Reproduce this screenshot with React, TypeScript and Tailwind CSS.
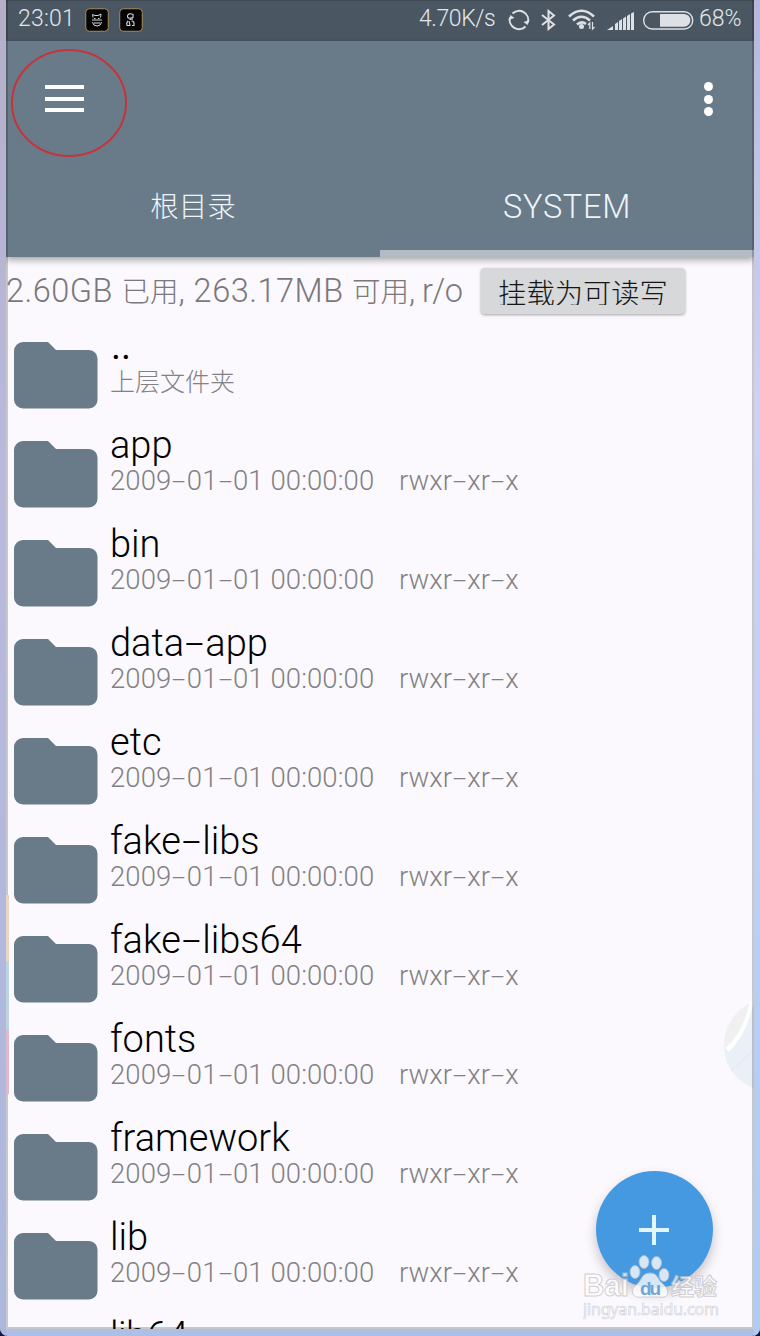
import React from 'react';

const folders = ['app', 'bin', 'data-app', 'etc', 'fake-libs', 'fake-libs64', 'fonts', 'framework', 'lib'];

function FolderIcon() {
    return (
        <svg className="w-[84px] h-[67px] shrink-0" viewBox="0 0 84 67" fill="#697b89">
            <path d="M9 0H34L42 8H75A8.500 8.500 0 0 1 83.500 17V58A8.500 8.500 0 0 1 75 66.500H9A9 9 0 0 1 0 58V9A9 9 0 0 1 9 0Z" />
        </svg>
    );
}

// hyphens are set wide, about as broad as a digit
function Dashed({ text }: { text: string }) {
    return (
        <>
            {text.split('-').map((part, i) => (
                <React.Fragment key={i}>
                    {i > 0 && <span className="inline-block w-[0.56em] text-center tracking-normal leading-[0.7] scale-x-180">-</span>}
                    {part}
                </React.Fragment>
            ))}
        </>
    );
}

function StatusBar() {
    return (
        <div className="h-[41px] shrink-0 bg-[#4a5762] border-t border-[#3f4a54] flex items-start pl-3 pr-px text-[#e3e7ea] text-[23px] leading-[36px] font-light">
            <span className="w-[60px] tracking-[0.2px]">23:01</span>
            <svg className="w-6 h-6 mt-[7px] ml-[7px]" viewBox="0 0 24 24" fill="none">
                <rect x="0.750" y="0.750" width="22.500" height="22.500" rx="3.500" fill="#050505" stroke="#a98d61" />
                <path d="M8 9.500L7.500 6.500L10 7.500H13L16 6L15.500 9.500M7 12H17M7.500 14Q8 18 12 18T16.500 14M9 10.500H10.500M13 10.500H14.500M9 15H15" stroke="#d8d8d8" strokeWidth="1" />
            </svg>
            <svg className="w-6 h-6 mt-[7px] ml-[10px]" viewBox="0 0 24 24" fill="none">
                <rect x="0.750" y="0.750" width="22.500" height="22.500" rx="3.500" fill="#050505" stroke="#a98d61" />
                <path d="M14.500 6.500Q9 4.500 8.500 8T14 9.500V6.500M10.500 11.500L14 11M9 13Q7 15 8 17.500H11L10 13M12.500 13Q15.500 13 15 17.500H13" stroke="#d8d8d8" strokeWidth="1.100" />
            </svg>
            <span className="ml-auto w-[78px] tracking-[-0.4px] whitespace-nowrap">4.70K/s</span>
            <svg className="w-[22px] h-[22px] mt-2 ml-[11px]" viewBox="0 0 22 22" fill="none" stroke="#dde0e4" strokeWidth="2">
                <path d="M4.500 4.500A9.300 9.300 0 0 1 20 13.500M17.500 17.500A9.300 9.300 0 0 1 2 8.500" />
                <path d="M21.500 11L19.500 16L15.500 13ZM0.500 11L2.500 6L6.500 9Z" fill="#dde0e4" stroke="none" />
            </svg>
            <svg className="w-[15px] h-[22px] mt-2 ml-[11px]" viewBox="0 0 15 22" fill="none" stroke="#dde0e4" strokeWidth="2">
                <path d="M1 6L13 15.500L7.500 20V2L13 6.500L1 16" />
            </svg>
            <svg className="w-7 h-[22px] mt-2 ml-3" viewBox="0 0 28 22" fill="none" stroke="#dde0e4" strokeWidth="2.600">
                <path d="M1 7.500Q13.500 -4 26 7.500M5 11.500Q13.500 4 22 11.500M9 15.500Q13.500 11.500 18 15" />
                <circle cx="13.500" cy="17.500" r="2.500" fill="#dde0e4" stroke="none" />
                <path d="M20 16L21.800 14V20M24.500 13V20L26.500 18" strokeWidth="1.200" />
            </svg>
            <svg className="w-[27px] h-[18px] mt-[11px] ml-[11px]" viewBox="0 0 27 18" fill="#dde0e4">
                <path d="M0 18L6 14V18ZM8 12L11 10V18H8ZM12 9L15 7V18H12ZM16 6.500L19 4.500V18H16ZM20 4L23 2V18H20ZM24 1.500L27 0V18H24Z" />
            </svg>
            <svg className="w-[51px] h-[19px] mt-[10px] ml-[9px]" viewBox="0 0 51 19" fill="none">
                <rect x="0.700" y="0.700" width="49" height="17.300" rx="8.600" stroke="#dde0e4" strokeWidth="1.400" />
                <path d="M17 3H41A6.300 6.300 0 0 1 41 15.700H17Z" fill="#dde0e4" />
            </svg>
            <span className="ml-[5px] w-[54px]">68%</span>
        </div>
    );
}

function Header() {
    return (
        <div className="relative z-10 h-[216px] shrink-0 bg-[#697b89] shadow-[0_3px_7px_rgba(0,0,0,0.35)] flex flex-col text-[#eef4f8]">
            <div className="relative h-[116px] flex justify-between">
                <div className="ml-[39px] mt-11 w-[39px] h-[27px] flex flex-col justify-between">
                    <div className="h-1 bg-white"></div>
                    <div className="h-1 bg-white"></div>
                    <div className="h-1 bg-white"></div>
                </div>
                <svg className="absolute left-[5px] top-[7px] w-[117px] h-[110px]" viewBox="0 0 117 110" fill="none">
                    <ellipse cx="58" cy="55" rx="57" ry="53" stroke="#c5333c" strokeWidth="2" />
                </svg>
                <div className="mr-[41px] mt-[41px] h-[34px] flex flex-col justify-between">
                    <div className="size-[9px] rounded-full bg-white"></div>
                    <div className="size-[9px] rounded-full bg-white"></div>
                    <div className="size-[9px] rounded-full bg-white"></div>
                </div>
            </div>
            <div className="flex flex-1 text-center font-light">
                <div className="w-[374px] pt-[33px] text-[28.500px] leading-[36px]">根目录</div>
                <div className="w-[374px] pt-[32px] border-b-[7px] border-[#b3bcc5] text-[32.500px] leading-[36px] tracking-[0.7px]">SYSTEM</div>
            </div>
        </div>
    );
}

function StorageInfo() {
    return (
        <div className="h-[73px] shrink-0 flex items-start pt-[11px] font-light text-[#79787b]">
            <span className="w-[475px] text-[32.500px] leading-[46px] whitespace-nowrap tracking-[0.5px]">
                2.60GB <span className="text-[28.500px] tracking-normal">已用</span>, 263.17MB <span className="text-[28.500px] tracking-normal">可用</span><span className="tracking-[-0.6px]">, r/o</span>
            </span>
            <button className="w-[204px] h-[46px] rounded bg-[#d6d8d9] shadow-[0_1px_3px_rgba(0,0,0,0.35)] flex justify-center items-start">
                {/* the label is clipped a little above the button's bottom padding */}
                <span className="h-[37px] overflow-hidden text-[28.300px] leading-[54px] font-light text-[#151515]">挂载为可读写</span>
            </button>
        </div>
    );
}

function Row({ name }: { name: string }) {
    return (
        <div className="h-[99px] shrink-0 flex pt-3 pl-2">
            <FolderIcon />
            <div className="pl-3 whitespace-nowrap">
                <div className="text-[38px] leading-9 -mt-[14px] font-light text-black"><Dashed text={name} /></div>
                <div className="flex text-[27.500px] leading-9 font-light text-[#828184]">
                    <span className="w-[290px] tracking-[0.1px]"><Dashed text="2009-01-01 00:00:00" /></span>
                    <span className="-ml-px"><Dashed text="rwxr-xr-x" /></span>
                </div>
            </div>
        </div>
    );
}

function Watermark() {
    return (
        <svg className="absolute left-[577px] top-[1253px] w-[142px] h-[68px]" viewBox="0 0 142 68">
            <g fill="#ffffff" stroke="#c4c3ca" strokeWidth="1" opacity="0.780">
                <ellipse cx="52" cy="19" rx="5" ry="6.500" />
                <ellipse cx="61" cy="9" rx="5" ry="6.500" />
                <ellipse cx="73.500" cy="10" rx="5" ry="6.500" />
                <ellipse cx="81" cy="22" rx="5" ry="6.500" />
                <path d="M67 20C58 20 59 28 53 32C46 38 50 46 60 44H76C87 46 87 37 80 31C74 26 75 20 67 20Z" />
                <text x="0" y="43" fontFamily="Liberation Sans" fontWeight="bold" fontSize="31" textLength="46" lengthAdjust="spacingAndGlyphs">Bai</text>
                <text x="88" y="42" fontFamily="Noto Sans CJK SC" fontWeight="bold" fontSize="23" textLength="46">经验</text>
                <text x="0" y="62" fontFamily="Noto Sans" fontSize="16" strokeWidth="0.600" textLength="136">jingyan.baidu.com</text>
            </g>
            <text x="57" y="42" fill="#6fa5da" fontFamily="Liberation Sans" fontWeight="bold" fontSize="19" textLength="21">du</text>
        </svg>
    );
}

export default function App() {
    return (
        <div className="w-[760px] h-[1336px] overflow-hidden bg-[#10183c]">
            <div className="w-[760px] h-[1336px] flex rounded-b-lg overflow-hidden bg-[#adbfe6]">
                <div className="w-[6px] bg-linear-to-b from-[#b3b0c8] via-[#b9b9dd] via-35% to-[#abb8dc]"></div>
                <div className="relative w-[748px] h-[1329px] overflow-hidden bg-[#fbf9fd] flex flex-col font-['Roboto','Noto_Sans_CJK_SC',sans-serif]">
                    <StatusBar />
                    <Header />
                    <StorageInfo />
                    <div className="h-[99px] shrink-0 flex pt-3 pl-2">
                        <FolderIcon />
                        <div className="pl-3">
                            <div className="pl-px text-[38px] leading-9 -mt-[14px] text-black">..</div>
                            <div className="mt-px text-[25px] leading-9 font-light text-[#828184]">上层文件夹</div>
                        </div>
                    </div>
                    {folders.map((name) => (
                        <Row key={name} name={name} />
                    ))}
                    <div className="shrink-0 -mt-[2px] pl-[104px] text-[38px] leading-9 tracking-[-0.5px] font-light text-black">lib64</div>

                    {/* floating ball half hidden at the edge */}
                    <svg className="absolute left-[717px] top-[1000px] w-[31px] h-[92px]" viewBox="0 0 31 92">
                        <circle cx="46" cy="46" r="45" fill="#ebeff6" />
                        <path d="M1 46C2 25 12 10 29 2L20 30Q12 42 1 48Z" fill="#f0f0f0" />
                        <path d="M27 1Q20 34 2 48L6 52Q24 34 31 1Z" fill="#ffffff" />
                        <path d="M8 71L29 52" stroke="#e4e6ec" fill="none" />
                    </svg>
                    <div className="absolute left-[590px] top-[1171px] size-[117px] rounded-full bg-[#4599e1] shadow-[0_6px_12px_rgba(0,0,0,0.22)] flex items-center justify-center">
                        <svg className="size-[30px] -ml-px" viewBox="0 0 30 30" stroke="#e0f7ff" strokeWidth="4">
                            <path d="M15 0V30M0 15H30" />
                        </svg>
                    </div>
                    <Watermark />
                    {/* window edge */}
                    <div className="absolute inset-0 z-20 border-x-2 border-b-2 border-black/20 pointer-events-none"></div>
                    <div className="absolute left-0 top-[895px] z-20 w-[3px] h-[199px] flex flex-col">
                        <div className="h-[66px] bg-[#e8d5c6]"></div>
                        <div className="h-[68px] bg-[#bdd3e2]"></div>
                        <div className="flex-1 bg-[#dfb9cc]"></div>
                    </div>
                </div>
                <div className="w-[6px] bg-linear-to-b from-[#b5b8dc] via-[#ced3f1] via-30% to-[#aecbf2]"></div>
            </div>
        </div>
    );
}
